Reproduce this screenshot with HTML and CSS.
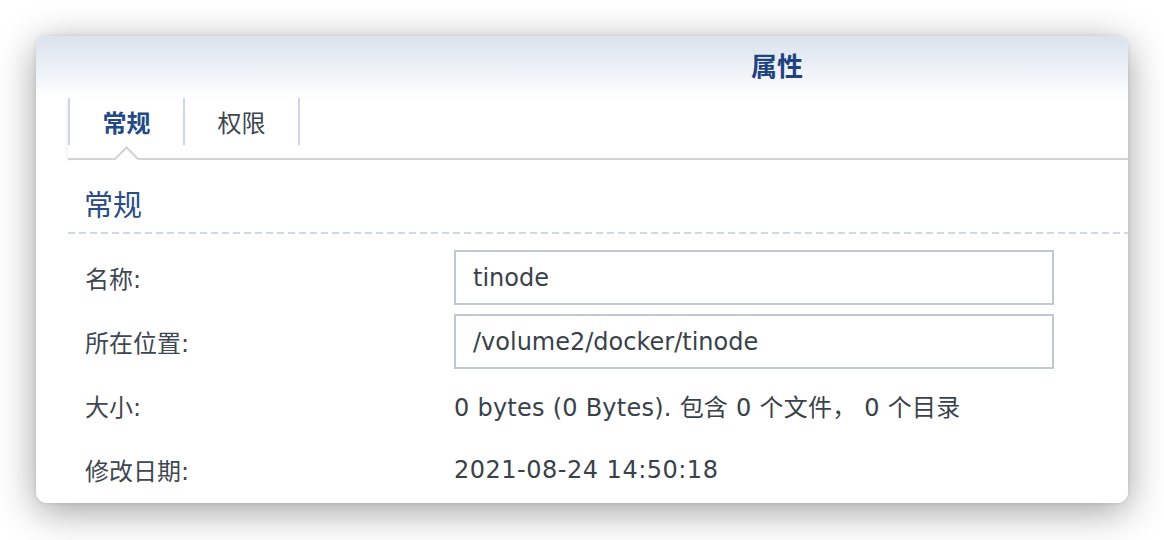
FILE: index.html
```html
<!DOCTYPE html>
<html lang="zh-CN">
<head>
<meta charset="utf-8">
<title>属性</title>
<link rel="stylesheet" href="styles.css">
</head>
<body>
<div class="window">
  <div class="header">
    <div class="title">属性</div>
  </div>
  <div class="tabbar">
    <div class="tab active">常规</div>
    <div class="tab">权限</div>
    <div class="tab-end"></div>
    <div class="caret"></div>
  </div>
  <div class="section">
    <div class="section-title">常规</div>
    <div class="dashed"></div>
    <div class="form">
      <div class="label">名称:</div>
      <div class="field"><div class="input">tinode</div></div>
      <div class="label">所在位置:</div>
      <div class="field"><div class="input">/volume2/docker/tinode</div></div>
      <div class="label">大小:</div>
      <div class="field"><div class="value size">0 bytes (0 Bytes). 包含 0 个文件， 0 个目录</div></div>
      <div class="label">修改日期:</div>
      <div class="field"><div class="value date">2021-08-24 14:50:18</div></div>
    </div>
  </div>
</div>
</body>
</html>
```

FILE: styles.css
```css
html, body {
  margin: 0;
  padding: 0;
  background: #ffffff;
}
body {
  font-family: "DejaVu Sans", "Noto Sans CJK SC", sans-serif;
  color: #3c444e;
  padding: 36px 36px 0 36px;
  width: 1164px;
  height: 540px;
  box-sizing: border-box;
  overflow: hidden;
}
.window {
  width: 1092px;
  height: 467px;
  background: #fff;
  border-radius: 11px;
  box-shadow: 0 8px 38px rgba(0, 0, 0, 0.38), 0 0 4px rgba(0,0,0,0.10);
  overflow: hidden;
  display: flex;
  flex-direction: column;
}
.header {
  height: 62px;
  flex: none;
  background: linear-gradient(#dae2ed 0%, #eef2f7 55%, #ffffff 100%);
  display: flex;
  align-items: center;
  padding-left: 715px;
}
.title {
  font-size: 26px;
  font-weight: bold;
  color: #1f4380;
  margin-top: -5px;
}
.tabbar {
  position: relative;
  margin-left: 32px;
  height: 60px;
  display: flex;
  align-items: flex-start;
  border-bottom: 2px solid #d2d2d2;
  box-shadow: 0 2px 4px rgba(0, 0, 0, 0.10);
  flex: none;
}
.tab {
  width: 113px;
  height: 47px;
  border-left: 2px solid #cbd7e6;
  display: flex;
  align-items: center;
  justify-content: center;
  font-size: 24px;
  color: #3e4650;
}
.tab.active {
  color: #234a85;
  font-weight: bold;
}
.tab-end {
  width: 0;
  height: 47px;
  border-left: 2px solid #cbd7e6;
}
.caret {
  position: absolute;
  left: 49px;
  bottom: -11px;
  width: 17px;
  height: 17px;
  background: #fff;
  border-top: 2px solid #d2d2d2;
  border-left: 2px solid #d2d2d2;
  transform: rotate(45deg);
}
.section {
  margin-left: 32px;
  flex: 1;
  background: #fff;
  position: relative;
}
.section-title {
  font-size: 29px;
  color: #2a4d86;
  padding: 28px 0 0 16px;
  line-height: 36px;
}
.dashed {
  margin-top: 8px;
  height: 2px;
  background: repeating-linear-gradient(90deg, #cfd9e6 0 7px, transparent 7px 11px);
}
.form {
  margin-top: 16px;
  display: grid;
  grid-template-columns: 369px 600px;
  grid-auto-rows: 55px;
  row-gap: 9px;
  padding-left: 17px;
}
.label, .field {
  display: flex;
  align-items: center;
  font-size: 24px;
}
.label {
  color: #3f4751;
}
.input {
  box-sizing: border-box;
  width: 600px;
  height: 55px;
  border: 2px solid #bfc8d3;
  padding-left: 17px;
  display: flex;
  align-items: center;
  color: #39414b;
}
.value {
  color: #39414b;
}
.size {
  letter-spacing: 0.25px;
}
.date {
  letter-spacing: 0.5px;
}
```
